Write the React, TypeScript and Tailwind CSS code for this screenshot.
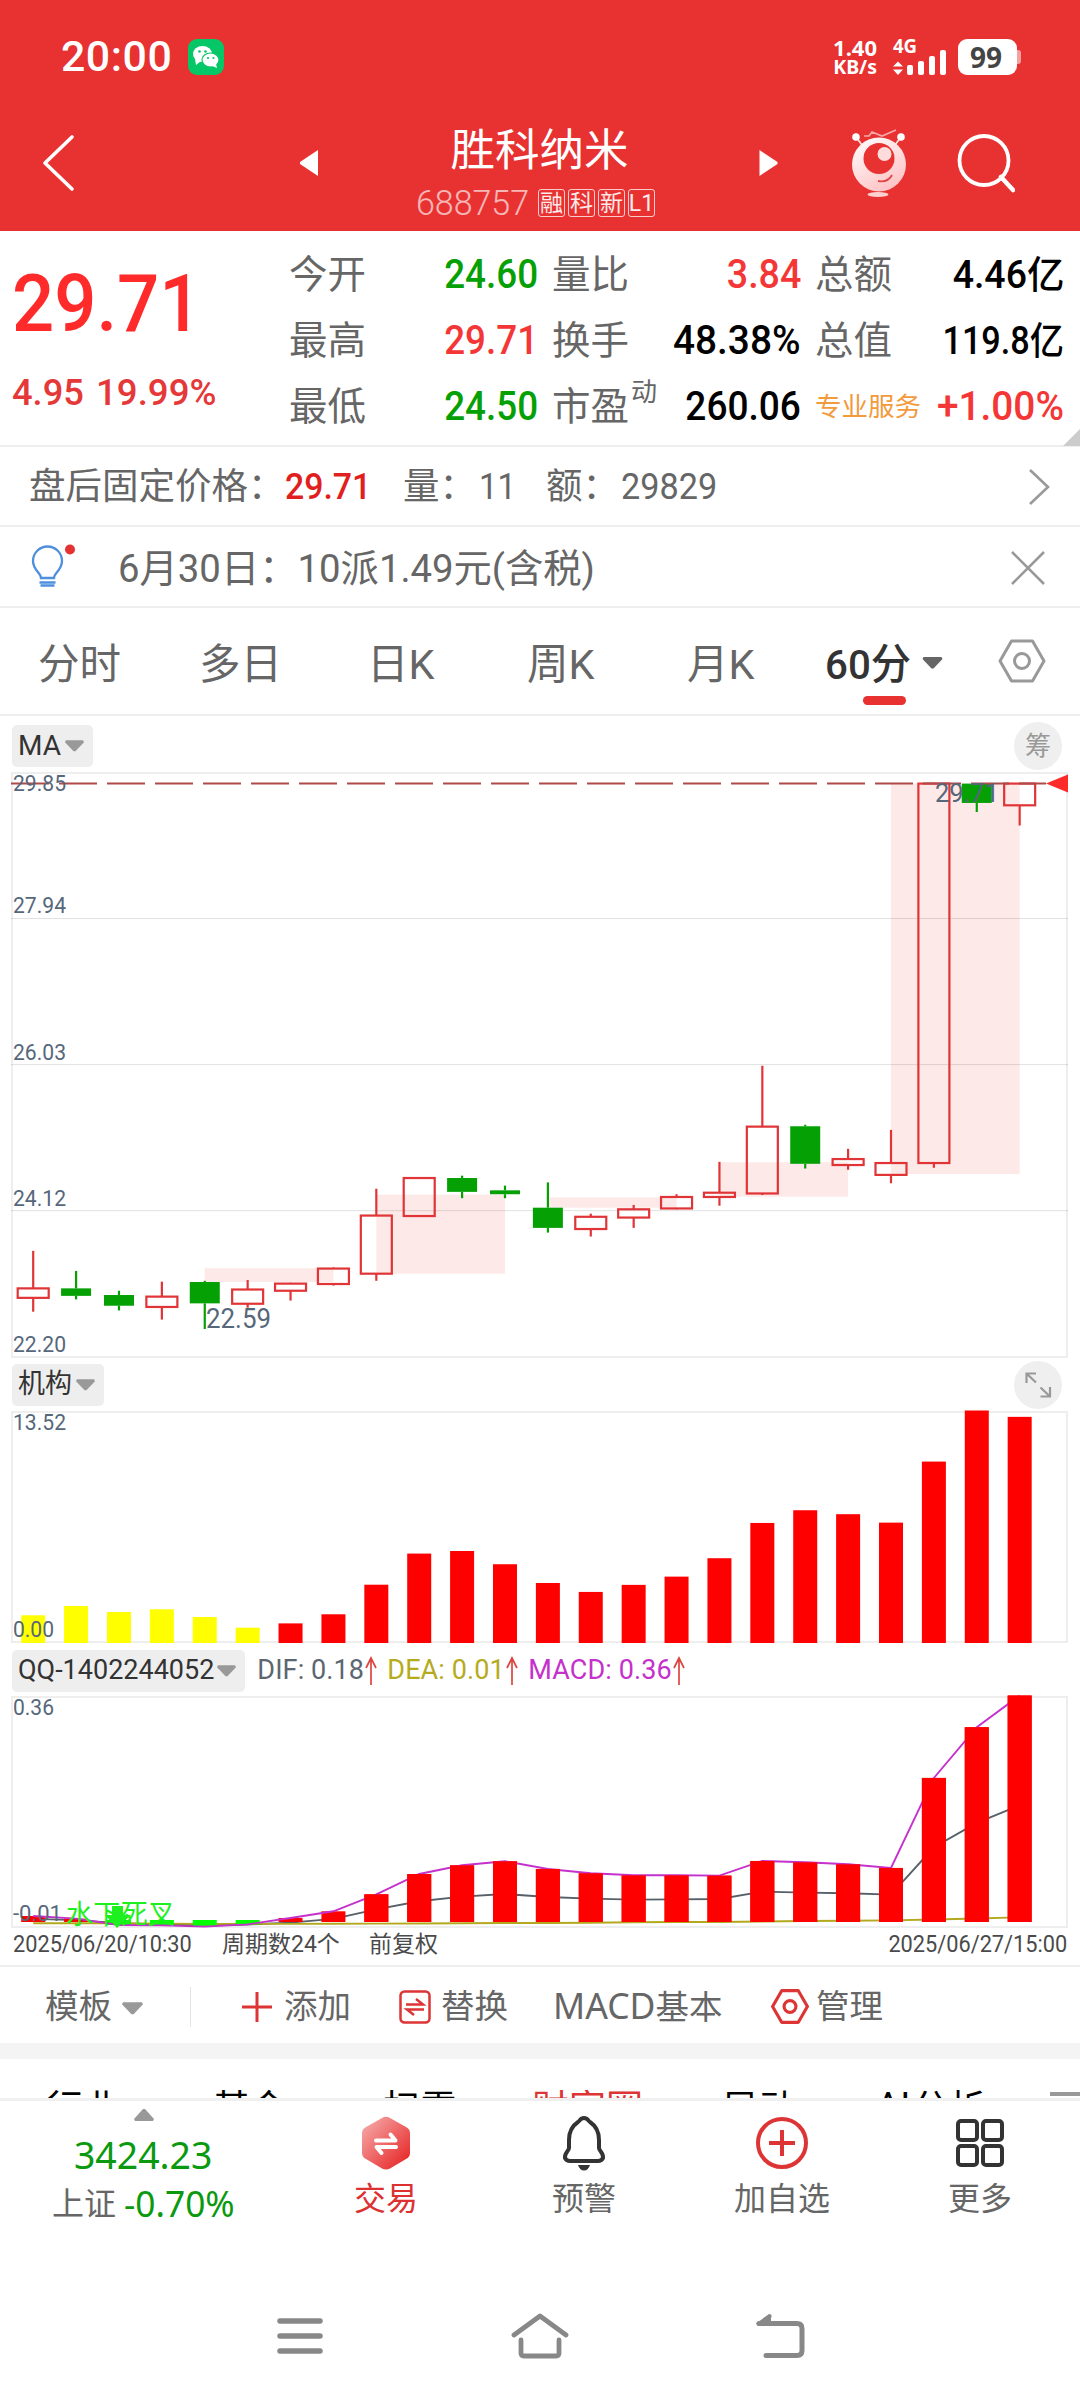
import type { ReactNode } from 'react';
import { clsx } from 'clsx';

type Candle = { open: number; close: number; high: number; low: number; up: boolean };

const STEP = 42.89;
const FIRST_X = 22.2;
const CHART_W = 1057;
const centerX = (i: number) => FIRST_X + i * STEP;

// [high, bodyTop, bodyBottom, low, up]
const KLINE: [number, number, number, number, boolean][] = [
  [23.595, 23.104, 22.98, 22.799, true],
  [23.332, 23.104, 23.006, 22.96, false],
  [23.073, 23.017, 22.877, 22.815, false],
  [23.192, 22.996, 22.861, 22.696, true],
  [23.203, 23.187, 22.908, 22.572, false],
  [23.213, 23.089, 22.903, 22.851, true],
  [23.177, 23.166, 23.073, 22.944, true],
  [23.378, 23.363, 23.161, 23.141, true],
  [24.407, 24.056, 23.296, 23.203, true],
  [24.552, 24.547, 24.05, 24.05, true],
  [24.578, 24.547, 24.366, 24.283, false],
  [24.448, 24.386, 24.335, 24.283, false],
  [24.49, 24.159, 23.895, 23.833, false],
  [24.081, 24.04, 23.88, 23.782, true],
  [24.195, 24.138, 24.03, 23.895, true],
  [24.335, 24.299, 24.149, 24.138, true],
  [24.759, 24.355, 24.299, 24.185, true],
  [26.015, 25.219, 24.345, 24.324, true],
  [25.244, 25.224, 24.733, 24.671, false],
  [24.929, 24.795, 24.717, 24.655, true],
  [25.177, 24.743, 24.588, 24.479, true],
  [29.705, 29.705, 24.743, 24.681, true],
  [29.705, 29.705, 29.452, 29.333, false],
  [29.705, 29.705, 29.421, 29.157, true],
];

const candles: Candle[] = KLINE.map(([high, top, bottom, low, up]) => ({
  high,
  low,
  up,
  open: up ? bottom : top,
  close: up ? top : bottom,
}));

// shaded day ranges: [from, to, top, bottom]
const ZONES = [
  [4, 7, 23.368, 23.187],
  [8, 11, 24.329, 23.296],
  [12, 15, 24.293, 24.159],
  [16, 19, 24.753, 24.303],
  [20, 23, 29.705, 24.598],
];

const ORG = [
  1.61, 2.15, 1.8, 1.96, 1.51, 0.89, 1.14, 1.67, 3.39, 5.2, 5.35, 4.58, 3.49, 2.97, 3.38, 3.86,
  4.93, 6.98, 7.72, 7.49, 7.0, 10.55, 13.52, 13.15,
];

const MACD = [
  0.0095, 0.0053, -0.0048, -0.0053, -0.0074, -0.0037, 0.0064, 0.017, 0.044, 0.0763, 0.0901, 0.0965,
  0.0843, 0.0774, 0.0742, 0.0742, 0.0737, 0.097, 0.0949, 0.0917, 0.0859, 0.229, 0.3096, 0.36,
];

const DIF = [
  0.005, 0.003, -0.002, -0.004, -0.0055, -0.004, -0.001, 0.005, 0.02, 0.033, 0.0403, 0.0445,
  0.0398, 0.0371, 0.0355, 0.036, 0.0366, 0.0482, 0.0467, 0.0456, 0.0435, 0.1188, 0.1575, 0.1856,
];

const DEA = [
  -0.0021, -0.0021, -0.0021, -0.0026, -0.003, -0.003, -0.003, -0.0028, -0.0026, -0.0024, -0.0021,
  -0.0016, -0.0016, -0.0012, -0.0005, 0, 0, 0.0008, 0.0016, 0.002, 0.0026, 0.004, 0.0056, 0.0075,
];

function Num({ children, className }: { children: ReactNode; className?: string }) {
  return (
    <span className={clsx('inline-block whitespace-nowrap leading-none', className)}>
      {children}
    </span>
  );
}

function Caret({ className }: { className?: string }) {
  return (
    <svg viewBox="0 0 20 12" className={clsx('shrink-0', className)} fill="currentColor">
      <path d="M1 0h18l1 2-9 9.500h-2L0 2z" />
    </svg>
  );
}

function HexIcon({ className, sw }: { className?: string; sw: number }) {
  return (
    <svg viewBox="0 0 48 44" className={clsx('shrink-0', className)} fill="none" stroke="currentColor" strokeWidth={sw}>
      <path d="M13.500 2h21L46 22 34.500 42h-21L2 22z" strokeLinejoin="round" />
      <circle cx="24" cy="22" r="7.500" />
    </svg>
  );
}

function StatusBar() {
  return (
    <div className="flex h-[114px] items-center pl-[61px] text-white">
      <Num className="w-[127px] origin-left scale-x-[1.02] text-[42px] font-medium tracking-[0.5px]">20:00</Num>
      <svg viewBox="0 0 36 36" className="size-9">
        <rect width="36" height="36" rx="9" fill="#06c767" />
        <ellipse cx="14.500" cy="15" rx="9.500" ry="8" fill="#fff" />
        <path d="M7 20l1 6 5-4z" fill="#fff" />
        <ellipse cx="22.500" cy="21" rx="8.500" ry="7" fill="#fff" stroke="#06c767" strokeWidth="1.200" />
        <path d="M24 27l5 2-1-4z" fill="#fff" />
        <g fill="#06c767">
          <circle cx="11.500" cy="12.500" r="1.300" />
          <circle cx="17.500" cy="12.500" r="1.300" />
          <circle cx="20" cy="19" r="1.100" />
          <circle cx="25.500" cy="19" r="1.100" />
        </g>
      </svg>
      <div className="ml-[600px] flex w-[55px] flex-col items-end pr-[2px] font-[Noto_Sans] text-[22px] font-bold leading-[20px]">
        <span>1.40</span>
        <span className="text-[19.5px]">KB/s</span>
      </div>
      <svg viewBox="0 0 56 42" className="ml-[13px] h-[42px] w-14 overflow-visible" fill="#fff">
        <text x="1" y="17" fontSize="19" fontWeight="700" fontFamily="Noto Sans" textLength="24" lengthAdjust="spacingAndGlyphs">4G</text>
        <path d="M6 25.500l5 5H1zM6 39l5-5.500H1z" />
        <rect x="15" y="29" width="6" height="10" rx="2" />
        <rect x="26" y="25" width="6" height="14" rx="2" />
        <rect x="37" y="20" width="6" height="19" rx="2" />
        <rect x="48" y="14" width="6" height="25" rx="2" />
      </svg>
      <div className="ml-[10px] flex h-9 w-[59px] items-center justify-center rounded-[9px] bg-white pr-[3px] font-[Noto_Sans] text-[28px] font-bold text-[#444]">
        99
      </div>
      <div className="h-[14px] w-1 rounded-r-[3px] bg-[#f4a0a0]" />
    </div>
  );
}

function Mascot() {
  return (
    <svg viewBox="0 0 60 70" className="h-[70px] w-[60px]">
      <defs>
        <linearGradient id="mascot" x1="0" y1="0" x2="0.6" y2="1">
          <stop offset="0" stopColor="#fff" />
          <stop offset="1" stopColor="#ffc4c6" />
        </linearGradient>
      </defs>
      <g stroke="#fde3e3" strokeWidth="1.700" fill="none">
        <path d="M7 8l6 8M52 8l-6 8" />
        <path d="M15 7l5 0 3-4 10 4 14-6" stroke="#f7a7a7" />
      </g>
      <circle cx="7" cy="8" r="3.800" fill="#fff" />
      <circle cx="52" cy="8" r="3.800" fill="#fff" />
      <circle cx="30" cy="35.500" r="27" fill="url(#mascot)" />
      <circle cx="30" cy="29.500" r="15.500" fill="#e83131" />
      <circle cx="35.500" cy="25" r="7" fill="#ffdcdc" />
      <path d="M29 52c6 1 11 0 14-6" stroke="#e04848" strokeWidth="1.800" fill="none" />
      <ellipse cx="29" cy="65.500" rx="10.500" ry="2.500" fill="#ffd0d0" />
    </svg>
  );
}

function TitleBar() {
  return (
    <div className="flex h-[117px] items-start text-white">
      <svg viewBox="0 0 34 58" className="ml-[42px] mt-[20px] h-[58px] w-[34px]" fill="none" stroke="#fff" strokeWidth="3.600">
        <path d="M30 3L3 29l27 26" strokeLinecap="round" strokeLinejoin="round" />
      </svg>
      <svg viewBox="0 0 18 26" className="ml-[224px] mt-[36px] h-[26px] w-[18px]">
        <path d="M18 0v26L0 14v-2z" fill="#fff" />
      </svg>
      <div className="ml-[60px] flex w-[323px] flex-col items-center">
        <div className="mt-[11px] text-[44.5px] leading-[52px]">胜科纳米</div>
        <div className="mt-[11px] flex h-[30px] items-center gap-[3px] pr-[8px]">
          <Num className="w-[119px] origin-left scale-x-[0.97] text-[35px] font-light text-white/65">688757</Num>
          {['融', '科', '新', 'L1'].map((tag) => (
            <span
              key={tag}
              className="flex h-7 w-[27px] items-center justify-center rounded-[3px] border border-white/75 text-[23px] leading-none text-white/90"
            >
              {tag}
            </span>
          ))}
        </div>
      </div>
      <svg viewBox="0 0 18 26" className="ml-[58px] mt-[36px] h-[26px] w-[19px]">
        <path d="M0 0v26l18-12v-2z" fill="#fff" />
      </svg>
      <div className="ml-[71px] mt-[15px]">
        <Mascot />
      </div>
      <svg viewBox="0 0 60 60" className="ml-[46px] mt-[19px] size-[60px]" fill="none" stroke="#fff" strokeWidth="3.800">
        <circle cx="29" cy="27.500" r="24.500" />
        <path d="M46 44l12 13" strokeWidth="4.500" strokeLinecap="round" />
      </svg>
    </div>
  );
}

const QUOTES: { label: string; value: string; style: string }[][] = [
  [
    { label: '今开', value: '24.60', style: 'text-[40px] text-[#04a004] scale-x-[0.92]' },
    { label: '最高', value: '29.71', style: 'text-[40px] text-[#f53636] scale-x-[0.92]' },
    { label: '最低', value: '24.50', style: 'text-[40px] text-[#04a004] scale-x-[0.92]' },
  ],
  [
    { label: '量比', value: '3.84', style: 'text-[40px] text-[#f53636] scale-x-[0.94]' },
    { label: '换手', value: '48.38%', style: 'text-[40px] text-black scale-x-[0.97]' },
    { label: '市盈', value: '260.06', style: 'text-[40px] text-black scale-x-[0.925]' },
  ],
  [
    { label: '总额', value: '4.46亿', style: 'text-[38px] text-black scale-x-[0.985]' },
    { label: '总值', value: '119.8亿', style: 'text-[38px] text-black scale-x-[0.9]' },
    { label: '专业服务', value: '+1.00%', style: 'text-[40px] text-[#f53636] scale-x-[0.97]' },
  ],
];

function QuotePanel() {
  return (
    <div className="relative flex h-[216px] border-b-2 border-[#eee]">
      <div className="w-[289px] pl-[12px]">
        <Num className="mt-[34px] origin-left scale-x-[0.94] text-[79px] font-medium text-[#ff2a2a]">29.71</Num>
        <div className="mt-[30px] flex">
          <Num className="w-[84px] origin-left scale-x-[0.98] text-[37px] font-medium text-[#e53838]">4.95</Num>
          <Num className="origin-left scale-x-[0.99] text-[37px] font-medium text-[#e53838]">19.99%</Num>
        </div>
      </div>
      {QUOTES.map((column, c) => (
        <div key={c} className={clsx('flex flex-col pt-[11px]', c === 2 ? 'w-[265px] pr-[16px]' : 'w-[263px] pr-[14px]')}>
          {column.map(({ label, value, style }) => (
            <div key={label} className="flex h-[66px] items-center justify-between">
              <span
                className={clsx(
                  'relative whitespace-nowrap leading-none',
                  label === '专业服务' ? 'text-[26.5px] text-[#f39a3c]' : 'text-[38.5px] text-[#666]',
                )}
              >
                {label}
                {label === '市盈' && <sup className="absolute -right-[28px] top-[-9px] text-[26px] leading-none">动</sup>}
              </span>
              <Num className={clsx('origin-right font-medium', style)}>{value}</Num>
            </div>
          ))}
        </div>
      ))}
      <svg viewBox="0 0 17 17" className="absolute bottom-[-1px] right-0 size-[17px]">
        <path d="M17 0v17H0z" fill="#ccc" />
      </svg>
    </div>
  );
}

function AfterHours() {
  return (
    <div className="flex h-20 items-center border-b-2 border-[#eee] pl-[29px] pt-[3px] text-[36.5px] text-[#666]">
      <span className="w-[256px] whitespace-nowrap leading-none">盘后固定价格：</span>
      <Num className="w-[118px] origin-left scale-x-[0.94] text-[36px] font-medium text-[#e01f1f]">29.71</Num>
      <span className="w-[76px] whitespace-nowrap leading-none">量：</span>
      <Num className="w-[67px] origin-left scale-x-[0.92] text-[36px]">11</Num>
      <span className="w-[75px] whitespace-nowrap leading-none">额：</span>
      <Num className="w-[406px] origin-left scale-x-[0.95] text-[36px]">29829</Num>
      <svg viewBox="0 0 24 40" className="h-10 w-6" fill="none" stroke="#999" strokeWidth="2.600">
        <path d="M3 3l18 17L3 37" />
      </svg>
    </div>
  );
}

function Notice() {
  return (
    <div className="flex h-[81px] items-center border-b-2 border-[#eee] pl-[31px] pt-[3px] text-[#666]">
      <svg viewBox="0 0 46 48" className="h-12 w-[46px]" fill="none" stroke="#4e90dd" strokeWidth="2.300">
        <path d="M10 34c0-5-8-8-8-17a14.500 14.500 0 0 1 29 0c0 9-8 12-8 17z" />
        <path d="M8.500 38.500h16M9.500 41.500h14" />
        <circle cx="39" cy="5.500" r="5" fill="#e53232" stroke="none" />
      </svg>
      <div className="ml-[41px] w-[892px] whitespace-nowrap pt-[3px] text-[38.5px] leading-none">
        <span className="inline-block origin-left scale-x-[0.995]">6月30日：10派1.49元(含税)</span>
      </div>
      <svg viewBox="0 0 36 36" className="size-9" fill="none" stroke="#999" strokeWidth="2.600">
        <path d="M2 2l32 32M34 2L2 34" />
      </svg>
    </div>
  );
}

const PERIODS = [
  { name: '分时', width: 'w-[161px]' },
  { name: '多日', width: 'w-[168px]' },
  { name: '日K', width: 'w-[160px]' },
  { name: '周K', width: 'w-[160px]' },
  { name: '月K', width: 'w-[138px]' },
];

function PeriodTabs() {
  return (
    <div className="flex h-[108px] items-center border-b-2 border-[#eee] pl-[38px] pt-[8px] text-[41.5px] text-[#666]">
      {PERIODS.map((p) => (
        <span key={p.name} className={clsx('leading-none', p.width)}>
          {p.name}
        </span>
      ))}
      <div className="relative w-[96px] whitespace-nowrap font-medium leading-none text-[#333]">
        <span className="inline-block origin-left scale-x-[0.97]">60分</span>
        <span className="absolute -bottom-[19px] left-[38px] h-[9px] w-[43px] rounded-full bg-[#e83131]" />
      </div>
      <Caret className="-mt-1 h-3 w-[23px] text-[#666]" />
      <HexIcon sw={3} className="-mt-2 ml-[54px] h-[44px] w-12 text-[#999]" />
    </div>
  );
}

function Pill({ children }: { children: ReactNode }) {
  return (
    <div className="ml-px flex h-[42px] items-center gap-[4px] rounded-[5px] bg-[#eee] pl-[6px] pr-[9px] text-[27px] leading-none text-[#333]">
      {children}
      <Caret className="h-3 w-[19px] text-[#999]" />
    </div>
  );
}

function AxisLabel({ x = 2, y, w, size = 22.5, children }: { x?: number; y: number; w: number; size?: number; children: string }) {
  return (
    <text x={x} y={y} fontSize={size} fill="#56677a" textLength={w} lengthAdjust="spacingAndGlyphs">
      {children}
    </text>
  );
}

function PriceChart() {
  const h = 586;
  const y = (price: number) => ((29.85 - price) / 7.65) * (h - 1) + 0.5;
  return (
    <svg viewBox={`0 0 ${CHART_W} ${h}`} width={CHART_W} height={h} className="block overflow-visible">
      <rect x="1" y="1" width={CHART_W - 2} height={h - 2} fill="none" stroke="#eee" strokeWidth="2" />
      {ZONES.map(([from, to, top, bottom]) => (
        <rect key={from} x={centerX(from)} y={y(top)} width={(to - from) * STEP} height={y(bottom) - y(top)} fill="#fde9e8" />
      ))}
      {[27.94, 26.03, 24.12].map((p) => (
        <line key={p} x1="0" x2={CHART_W} y1={y(p)} y2={y(p)} stroke="#000" strokeOpacity="0.12" />
      ))}
      {candles.map((c, i) => {
        const top = y(Math.max(c.open, c.close));
        const bottom = y(Math.min(c.open, c.close));
        const x = centerX(i);
        const color = c.up ? '#e03436' : '#04a004';
        return (
          <g key={i} stroke={color} strokeWidth="2.200">
            <line x1={x} x2={x} y1={y(c.high)} y2={top} />
            <line x1={x} x2={x} y1={bottom} y2={y(c.low)} />
            {c.up ? (
              <rect x={x - 15.500} y={top} width="31" height={bottom - top} fill="none" />
            ) : (
              <rect x={x - 15} y={top} width="30" height={Math.max(bottom - top, 2)} fill={color} stroke="none" />
            )}
          </g>
        );
      })}
      <line x1="0" x2="1035" y1={y(29.705)} y2={y(29.705)} stroke="#ae4a48" strokeWidth="2" strokeDasharray="38 10" />
      <path d={`M1035 ${y(29.705)}l22-9v18z`} fill="#ff2a2a" />
      <AxisLabel y={19} w={53}>29.85</AxisLabel>
      <AxisLabel y={141} w={53}>27.94</AxisLabel>
      <AxisLabel y={288} w={53}>26.03</AxisLabel>
      <AxisLabel y={434} w={53}>24.12</AxisLabel>
      <AxisLabel y={580} w={53}>22.20</AxisLabel>
      <AxisLabel x={195} y={556} w={65} size={27}>22.59</AxisLabel>
      <AxisLabel x={924} y={30} w={64} size={25}>29.71</AxisLabel>
    </svg>
  );
}

function OrgChart() {
  const h = 232;
  return (
    <svg viewBox={`0 0 ${CHART_W} ${h}`} width={CHART_W} height={h} className="block overflow-visible">
      <rect x="1" y="1" width={CHART_W - 2} height={h - 2} fill="none" stroke="#eee" strokeWidth="2" />
      {ORG.map((v, i) => {
        const barH = (v / 13.52) * 232.500;
        return <rect key={i} x={centerX(i) - 12} y={h - barH} width="24" height={barH} fill={i < 6 ? '#ffff00' : '#ff0000'} />;
      })}
      <AxisLabel y={19} w={53}>13.52</AxisLabel>
      <AxisLabel y={226} w={41}>0.00</AxisLabel>
    </svg>
  );
}

function MacdChart() {
  const h = 232;
  const zero = 226;
  const y = (v: number) => zero - (v / 0.36) * 226.500;
  const line = (values: number[]) => values.map((v, i) => `${centerX(i)},${y(v)}`).join(' ');
  return (
    <svg viewBox={`0 0 ${CHART_W} ${h}`} width={CHART_W} height={h} className="block overflow-visible">
      <rect x="1" y="1" width={CHART_W - 2} height={h - 2} fill="none" stroke="#eee" strokeWidth="2" />
      <g fill="none" strokeWidth="1.900">
        <polyline points={line(DIF)} stroke="#566068" />
        <polyline points={line(DEA)} stroke="#b3a81e" />
      </g>
      {MACD.map((v, i) => (
        <rect
          key={i}
          x={centerX(i) - 12}
          y={v > 0 ? y(v) : zero - 2}
          width="24"
          height={v > 0 ? zero - y(v) : y(v) - zero + 2}
          fill={v > 0 ? '#ff0000' : '#00ff00'}
        />
      ))}
      <polyline points={line(MACD)} stroke="#c531cb" fill="none" strokeWidth="1.900" />
      {MACD.map((v, i) => v > 0.04 && <rect key={i} x={centerX(i) - 12} y={y(v)} width="24" height={zero - y(v)} fill="#ff0000" />)}
      <path d="M101 210h11v9h8l-14 13-12-13h7z" fill="#1eef1e" />
      <text x="55" y="228" fontSize="27" fill="#1eef1e" textLength="109">水下死叉</text>
      <AxisLabel y={19} w={41}>0.36</AxisLabel>
      <AxisLabel y={225} w={49}>-0.01</AxisLabel>
    </svg>
  );
}

function Indicator({ name, value, color, width }: { name: string; value: string; color: string; width: string }) {
  return (
    <div className={clsx('flex items-center', color, width)}>
      <Num className="text-[27px] tracking-[0.1px]">
        {name}: {value}
      </Num>
      <svg viewBox="0 0 12 30" className="ml-px h-[30px] w-3 shrink-0" fill="none" stroke="#dc4640" strokeWidth="1.700">
        <path d="M6 29V2M1 12L6 2l5 10" />
      </svg>
    </div>
  );
}

function Charts() {
  return (
    <div className="flex h-[1252px] flex-col border-b-2 border-[#eee] pl-[11px]">
      <div className="flex h-[56px] items-center justify-between pr-[18px] pt-[5px]">
        <Pill>
          <Num className="text-[28px]">MA</Num>
        </Pill>
        <div className="flex size-12 items-center justify-center rounded-full bg-[#efefef] text-[26px] leading-none text-[#999]">
          筹
        </div>
      </div>
      <PriceChart />
      <div className="flex h-[53px] items-center justify-between pr-[18px] pt-[1px]">
        <Pill>机构</Pill>
        <svg viewBox="0 0 48 48" className="size-12">
          <circle cx="24" cy="24" r="24" fill="#efefef" />
          <path d="M12.500 22v-9.500H22M12.500 12.500l9.500 9M36 26v9.500h-9.500M36 35.500l-9.500-9" fill="none" stroke="#999" strokeWidth="2.200" />
        </svg>
      </div>
      <OrgChart />
      <div className="flex h-[53px] items-center pt-[3px]">
        <Pill>
          <Num className="-mr-[1px] text-[27px]">QQ-1402244052</Num>
        </Pill>
        <div className="ml-[12px] flex items-center">
          <Indicator name="DIF" value="0.18" color="text-[#5c6670]" width="w-[130px]" />
          <Indicator name="DEA" value="0.01" color="text-[#b5ab1d]" width="w-[141px]" />
          <Indicator name="MACD" value="0.36" color="text-[#c531cb]" width="w-[160px]" />
        </div>
      </div>
      <MacdChart />
      <div className="flex h-[34px] items-center pl-[2px] pr-[13px] text-[23px] leading-none text-[#4a4a4a]">
        <Num className="w-[209px] origin-left scale-x-[0.945]">2025/06/20/10:30</Num>
        <span className="w-[147px] whitespace-nowrap">周期数24个</span>
        <span>前复权</span>
        <Num className="ml-auto origin-right scale-x-[0.945]">2025/06/27/15:00</Num>
      </div>
    </div>
  );
}

function Toolbar() {
  return (
    <div className="box-content flex h-[73px] items-center border-b-[16px] border-[#f4f4f4] pl-[45px] pt-[3px] text-[33.5px] leading-none text-[#666]">
      <span className="w-[77px]">模板</span>
      <Caret className="mt-1 h-[13px] w-[21px] text-[#999]" />
      <span className="ml-[47px] h-10 w-px bg-[#e4e4e4]" />
      <svg viewBox="0 0 32 32" className="ml-[50px] size-8" stroke="#dd3535" strokeWidth="3">
        <path d="M1 16h30M16 1v30" />
      </svg>
      <span className="ml-[11px] w-[115px]">添加</span>
      <svg viewBox="0 0 32 34" className="h-[34px] w-8" fill="none" stroke="#dd3535" strokeWidth="2.500">
        <rect x="1.500" y="1.500" width="29" height="31" rx="4" />
        <path d="M7 14.500h17l-7-5.500M25 19.500H8l7 5.500" />
      </svg>
      <span className="ml-[10px] w-[112px]">替换</span>
      <span className="w-[218px] whitespace-nowrap">
        <span className="font-[Noto_Sans] text-[35.5px] leading-none">MACD</span>基本
      </span>
      <HexIcon sw={4} className="h-[35px] w-[38px] text-[#dd3535]" />
      <span className="ml-[7px]">管理</span>
    </div>
  );
}

// only the tops of the labels show above the bottom bar
function SectionTabs() {
  return (
    <div className="flex h-[39px] overflow-hidden pl-[46px] pt-[31px] text-[37px] leading-[40px] text-black">
      <span className="w-[167px]">行业</span>
      <span className="w-[170px]">基金</span>
      <span className="w-[149px]">扫雷</span>
      <span className="w-[190px] text-[#dd3535]">财富圈</span>
      <span className="w-[154px]">异动</span>
      <span className="flex w-[174px]">
        <span className="-mt-[4px] w-[36px]">AI</span>分析
      </span>
      <span className="mt-[2px] h-[4px] w-[30px] shrink-0 bg-[#999]" />
    </div>
  );
}

function NavItem({ label, active, children }: { label: string; active?: boolean; children: ReactNode }) {
  return (
    <div className="flex w-[198px] flex-col items-center pt-[14px]">
      <svg viewBox="0 0 56 56" className="size-14" fill="none" strokeWidth="4">
        {children}
      </svg>
      <span className={clsx('mt-[12px] text-[32px] leading-none', active ? 'text-[#dd3030]' : 'text-[#666]')}>{label}</span>
    </div>
  );
}

function BottomNav() {
  return (
    <div className="flex h-[140px] border-t-[3px] border-[#f0f0f0]">
      <div className="flex w-[287px] flex-col items-center pt-[8px]">
        <svg viewBox="0 0 20 12" className="h-3 w-5">
          <path d="M9 0h2l9 10-1 2H1l-1-2z" fill="#999" />
        </svg>
        <Num className="mt-[13px] scale-x-[0.96] font-[Noto_Sans] text-[39px] text-[#0a990f]">3424.23</Num>
        <div className="mt-[13px] flex items-center text-[32px] leading-none text-[#666]">
          上证
          <Num className="ml-[8px] origin-left scale-x-[0.98] font-[Noto_Sans] text-[36px] text-[#0a990f] -mr-[2px]">-0.70%</Num>
        </div>
      </div>
      <NavItem label="交易" active>
        <defs>
          <linearGradient id="trade" x1="0" y1="0" x2="1" y2="1">
            <stop offset="0.1" stopColor="#f5a3a3" />
            <stop offset="0.85" stopColor="#e83232" />
          </linearGradient>
        </defs>
        <path d="M24 3q4-2.500 8 0l16 9q4 2 4 6v20q0 4-4 6l-16 9.500q-4 2-8 0L8 44q-4-2-4-6V18q0-4 4-6z" fill="url(#trade)" />
        <path d="M18 25.500h19.500l-5-6M38 32H18.500l5 6" stroke="#fff" strokeLinecap="round" strokeLinejoin="round" />
      </NavItem>
      <NavItem label="预警">
        <path
          d="M28 3c-4 0-4 3-6 4-6 4-9 10-9 18v8c0 3-5 5-4 10 1 2 3 3 5 3h28c2 0 4-1 5-3 1-5-4-7-4-10v-8c0-8-3-14-9-18-2-1-2-4-6-4z"
          stroke="#333"
        />
        <path d="M22 50h12q-2 5.500-6 5.500T22 50z" fill="#333" />
      </NavItem>
      <NavItem label="加自选">
        <circle cx="28" cy="28" r="24" stroke="#dd3535" />
        <path d="M28 15v26M15 28h26" stroke="#dd3535" />
      </NavItem>
      <NavItem label="更多">
        <g stroke="#333">
          <rect x="6" y="6" width="19" height="19" rx="3" />
          <rect x="31" y="6" width="19" height="19" rx="3" />
          <rect x="6" y="31" width="19" height="19" rx="3" />
          <rect x="31" y="31" width="19" height="19" rx="3" />
        </g>
      </NavItem>
    </div>
  );
}

function SystemNav() {
  return (
    <div className="flex h-[162px] items-center pl-[274px] pt-[33px]">
      <svg viewBox="0 0 52 46" className="mt-[1px] h-[46px] w-[52px]" fill="none" stroke="#888" strokeWidth="5.500" strokeLinecap="round">
        <path d="M6 8h40M6 23h40M6 38h40" />
      </svg>
      <svg viewBox="0 0 58 46" className="ml-[185px] h-[46px] w-[58px]" fill="none" stroke="#888" strokeWidth="4.800" strokeLinecap="round" strokeLinejoin="round">
        <path d="M3 22L29 3l26 19M10 27v13q0 3 3 3h32q3 0 3-3V27" />
      </svg>
      <svg viewBox="0 0 50 46" className="ml-[186px] h-[46px] w-[50px]" fill="none" stroke="#888" strokeWidth="5">
        <path d="M4 10.500h38q5 0 5 5v22q0 5-5 5H11" strokeLinecap="round" />
        <path d="M1 10.500L14 1q4 0 2 4v8H3z" fill="#888" stroke="none" />
      </svg>
    </div>
  );
}

export default function App() {
  return (
    <div className="flex h-[2400px] w-[1080px] flex-col overflow-hidden bg-white font-[Roboto,'Noto_Sans_CJK_SC',sans-serif]">
      <header className="h-[231px] shrink-0 bg-[#e83131]">
        <StatusBar />
        <TitleBar />
      </header>
      <QuotePanel />
      <AfterHours />
      <Notice />
      <PeriodTabs />
      <Charts />
      <Toolbar />
      <SectionTabs />
      <BottomNav />
      <SystemNav />
    </div>
  );
}
